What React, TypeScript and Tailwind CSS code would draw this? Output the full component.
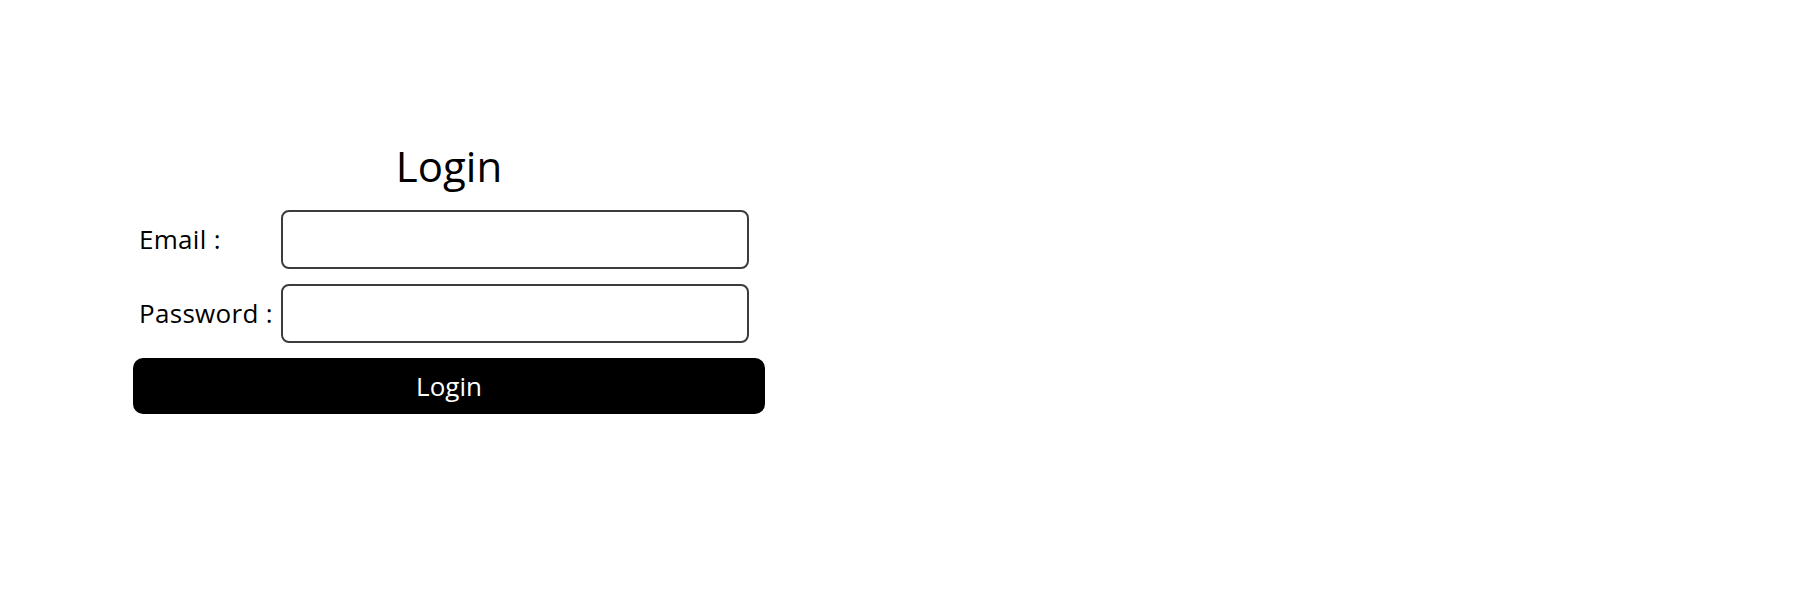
export default function App() {
  return (
    <div className="min-h-[600px] bg-white pl-[133px] pt-[139px] font-['Open_Sans',sans-serif] text-black">
      <form className="w-[632px]" onSubmit={(e) => e.preventDefault()}>
        <h1 className="text-center text-[42px] leading-[53px]">Login</h1>
        <div className="mt-[18px] flex flex-col gap-[15px] pl-1.5">
          <div className="flex items-center">
            <label className="w-[142px] text-[26px] tracking-[0.3px]">Email :</label>
            <input type="email" className="h-[59px] w-[468px] rounded-lg border-2 border-[#3c3c3c] px-2 text-[22px] outline-none" />
          </div>
          <div className="flex items-center">
            <label className="w-[142px] text-[26px] tracking-[0.3px]">Password :</label>
            <input type="password" className="h-[59px] w-[468px] rounded-lg border-2 border-[#3c3c3c] px-2 text-[22px] outline-none" />
          </div>
        </div>
        <button type="submit" className="mt-[15px] h-[56px] w-full rounded-[10px] bg-black text-[26px] text-white">
          Login
        </button>
      </form>
    </div>
  );
}
